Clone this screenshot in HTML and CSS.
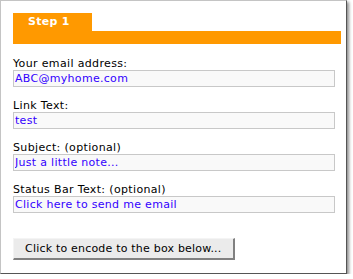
FILE: index.html
```html
<!DOCTYPE html>
<html lang="en">
<head>
  <meta charset="UTF-8" />
  <title>Email encoder</title>
  <link rel="stylesheet" href="styles.css">
</head>
<body>

  <div class="frame">
    <div class="step">
      <div class="step-tab">Step 1</div>
      <div class="step-bar"></div>
    </div>

    <form class="fields" onsubmit="return false">
      <label class="field">
        <span class="field-label">Your email address:</span>
        <input class="field-input" type="text" value="ABC@myhome.com" />
      </label>
      <label class="field">
        <span class="field-label">Link Text:</span>
        <input class="field-input" type="text" value="test" />
      </label>
      <label class="field">
        <span class="field-label">Subject: (optional)</span>
        <input class="field-input" type="text" value="Just a little note..." />
      </label>
      <label class="field">
        <span class="field-label">Status Bar Text: (optional)</span>
        <input class="field-input" type="text" value="Click here to send me email" />
      </label>

      <button class="encode-btn" type="button">Click to encode to the box below...</button>
    </form>
  </div>

</body>
</html>
```

FILE: styles.css
```css
body { margin: 0; background: #fff; font-family: "DejaVu Sans", Verdana, sans-serif; }

.frame {
  width: 333px; height: 260px;
  padding: 12px 0 0 12px;
  background: #fff;
  border-left: 1px solid #c4c4c4; border-top: 1px solid #c4c4c4;
  border-right: 1px solid #555; border-bottom: 1px solid #555;
  box-shadow: 2px 2px 3px rgba(0, 0, 0, 0.45);
}

.step { width: 328px; }
.step-tab {
  width: 64px; height: 18px; padding-left: 15px;
  background: #ff9900; color: #fff;
  font-size: 11px; font-weight: bold; line-height: 18px; letter-spacing: 0.3px;
}
.step-bar { height: 13px; background: #ff9900; }

.fields { margin-top: 13px; width: 322px; }
.field { display: block; margin-bottom: 12px; }
.field-label { display: block; font-size: 11px; line-height: 13px; color: #000; letter-spacing: 0.35px; }
.field-input {
  display: block; box-sizing: border-box;
  width: 322px; height: 17px; margin: 0; padding: 0 1px;
  border: 1px solid #c8c8c8; background: #f9f9f9;
  font-family: "DejaVu Sans", Verdana, sans-serif; font-size: 11px; letter-spacing: 0.3px;
  color: #3300ff; outline: none;
}

.encode-btn {
  margin-top: 13px; height: 22px; padding: 0 11px;
  background: #ebebeb; color: #000;
  border: 1px solid #f4f4f4; border-right: 2px solid #808080; border-bottom: 2px solid #808080;
  font-family: "DejaVu Sans", Verdana, sans-serif; font-size: 11px; letter-spacing: 0.2px;
  cursor: pointer;
}
```
